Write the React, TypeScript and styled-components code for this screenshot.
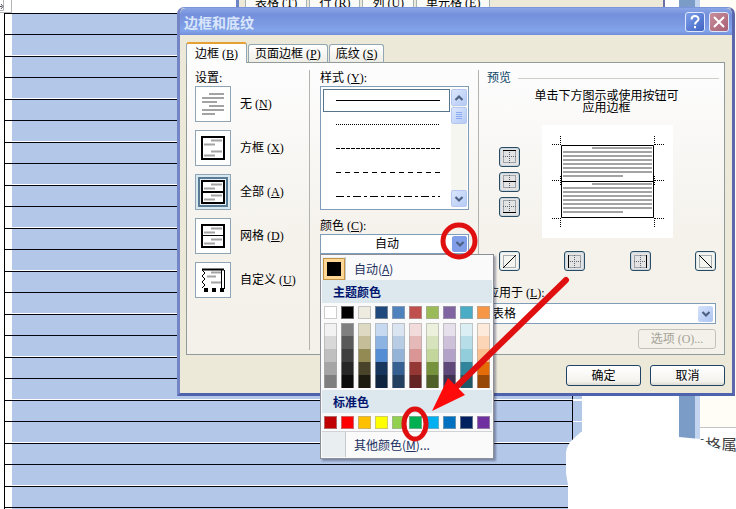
import React from 'react';
import styled, { createGlobalStyle } from 'styled-components';

const Global = createGlobalStyle`
  * { box-sizing: border-box; }
  body { margin: 0; background: #fff; }
  body, button, select {
    font-family: "Liberation Serif", "Noto Sans CJK SC", serif;
    font-size: 12px;
    line-height: 16px;
    color: #000;
  }
  button { padding: 0; margin: 0; cursor: default; }
  svg { display: block; }
`;

/* ---------- document behind the dialog ---------- */

const Desktop = styled.main`
  position: relative;
  min-height: 100vh;
  overflow: hidden;
`;

const Document = styled.div`
  display: grid;
  grid-template-columns: 1fr 97px 16px 5px 36px;
  height: 100vh;
  overflow: hidden;
`;

const Sheet = styled.div`
  padding: 13px 0 0 4px;
  overflow: hidden;
`;

const DocTable = styled.table`
  width: 100%;
  border-collapse: separate;
  border-spacing: 0;
  border-left: 1px solid #000;
`;

const DocRow = styled.tr<{ $even: boolean }>`
  height: ${p => (p.$even ? 22 : 21)}px;
  td {
    padding: 0;
    border-top: 1px solid #05050f;
    border-bottom: ${p => (p.$even ? '1px solid #fff' : '0')};
  }
`;

const Gutter = styled.td`
  width: 7px;
  background: #fff;
`;

const Selected = styled.td`
  background: #b3c7e8;
  border-right: 1px solid #05050f;
`;

const RowEnd = styled.td`
  width: 9px;
  background: #b3c7e8;
  && { border-top-color: #fff; }
`;

const Strip = styled.div<{ $color: string }>`
  background: ${p => p.$color};
`;

const SidePane = styled.div`
  display: grid;
  grid-template-rows: 428px 1fr;
  background: #fff;
  overflow: hidden;
`;

const SideTop = styled.div`
  background: #fffdf6;
  border-bottom: 1px solid #c4c4c4;
`;

const SideText = styled.div`
  display: flex;
  justify-content: flex-end;
  width: 37px;
  padding-top: 6px;
  font: 16px/20px "Noto Sans CJK SC", sans-serif;
  color: #444;
  white-space: nowrap;
`;

const MoveHandle = styled.div`
  position: absolute;
  left: 0;
  top: 0;
`;

const Blob = styled.svg`
  position: absolute;
  right: 0;
  top: 425px;
`;

const BackWindow = styled.div`
  position: absolute;
  left: 236px;
  right: 71px;
  top: 0;
  height: 12px;
  display: flex;
  align-items: flex-end;
  gap: 2px;
  padding: 0 0 2px 6px;
  background: #ece9d8;
  border-left: 3px solid #6b83c6;
  border-right: 2px solid #6b70a8;
  overflow: hidden;
`;

const BackTab = styled.div`
  padding: 0 9px;
  height: 10px;
  display: flex;
  align-items: flex-end;
  background: #fafaf7;
  border: solid #a5b3b5;
  border-width: 0 1px;
  line-height: 14px;
  white-space: pre;
`;

/* ---------- dialog ---------- */

const Dialog = styled.section`
  position: absolute;
  left: 177px;
  right: 1px;
  top: 7px;
  border: 3px solid #6b83c9;
  border-color: #7b94dc #5c66ad #4e62ad #7485c6;
  border-top-width: 1px;
  border-radius: 7px 7px 0 0;
  background: #ece9d8;
`;

const TitleBar = styled.header`
  display: flex;
  align-items: center;
  gap: 4px;
  height: 27px;
  padding: 0 3px 0 4px;
  border-radius: 6px 6px 0 0;
  background: linear-gradient(#8ba6e5, #7590dc 25%, #7c9ae2 60%, #82a4ea 85%, #728dd8);
`;

const Title = styled.h1`
  flex: 1;
  margin: 0;
  font: bold 14px/20px "Noto Sans CJK SC", sans-serif;
  color: #d9e6fb;
`;

const CaptionButton = styled.button<{ $close?: boolean }>`
  display: grid;
  place-items: center;
  width: 20px;
  height: 20px;
  border: 1px solid #dfe7fa;
  border-radius: 3px;
  background: ${p => (p.$close
    ? 'linear-gradient(135deg, #c88f9c, #a85f74)'
    : 'linear-gradient(135deg, #7fa0ea, #3f63c4)')};
`;

const Body = styled.div`
  padding: 7px 7px 7px 6px;
`;

const Tabs = styled.div`
  display: flex;
  align-items: flex-end;
  gap: 1px;
  height: 21px;
  margin-bottom: -1px;
`;

const Tab = styled.button<{ $active?: boolean }>`
  position: relative;
  height: ${p => (p.$active ? 21 : 19)}px;
  padding: 0 ${p => (p.$active ? 8 : 6)}px;
  border: 1px solid #91a7b4;
  border-top: ${p => (p.$active ? '2px solid #e5a135' : '1px solid #91a7b4')};
  border-bottom: ${p => (p.$active ? '0' : '1px solid #919b9c')};
  border-radius: 3px 3px 0 0;
  background: ${p => (p.$active ? '#fdfdfd' : 'linear-gradient(#fff, #eeede5)')};
  white-space: nowrap;
`;

const Panel = styled.div`
  display: grid;
  grid-template-columns: 123px 169px 1fr;
  padding: 7px 0 4px;
  border: 1px solid #919b9c;
  background: linear-gradient(#fdfdfe, #f5f2ec 60%, #f4f1eb);
`;

const Column = styled.div<{ $divided?: boolean }>`
  display: flex;
  flex-direction: column;
  min-height: 280px;
  padding: 0 8px;
  border-right: ${p => (p.$divided ? '1px solid #b3b3ad' : '0')};
`;

const StyleColumn = styled(Column)`
  padding: 0 9px 0 10px;
`;

const Caption = styled.div`
  height: 16px;
  white-space: nowrap;
`;

const Settings = styled.div`
  display: flex;
  flex-direction: column;
  gap: 8px;
`;

const Setting = styled.button`
  display: flex;
  align-items: center;
  gap: 9px;
  border: 0;
  background: none;
  white-space: nowrap;
`;

const Thumb = styled.span<{ $selected?: boolean }>`
  display: grid;
  place-items: center;
  width: 36px;
  height: 36px;
  background: ${p => (p.$selected ? '#e6f0f6' : '#fff')};
  border: 1px solid #8fa5b5;
  box-shadow: ${p => (p.$selected ? 'inset 0 0 0 2px #d7e8f1, inset 0 0 0 4px #587a92' : 'none')};
`;

const StyleList = styled.div`
  display: grid;
  grid-template-columns: 1fr 16px;
  height: 124px;
  padding: 2px 1px 2px 2px;
  margin-bottom: 8px;
  gap: 1px;
  background: #fff;
  border: 1px solid #7f9db9;
`;

const StyleOptions = styled.div`
  display: flex;
  flex-direction: column;
  overflow: hidden;
`;

const StyleOption = styled.button<{ $selected?: boolean }>`
  display: flex;
  align-items: center;
  flex: 0 0 23px;
  margin-bottom: 1px;
  padding: 0 9px 0 12px;
  background: #fff;
  border: 1px solid ${p => (p.$selected ? '#56748c' : 'transparent')};
  svg { width: 100%; }
`;

const ScrollBar = styled.div`
  display: flex;
  flex-direction: column;
  justify-content: space-between;
  background: #f6f6f1;
`;

const ScrollGroup = styled.div`
  display: grid;
  gap: 1px;
`;

const ScrollButton = styled.button`
  display: grid;
  place-items: center;
  width: 16px;
  height: 17px;
  border: 1px solid #b6c8ef;
  border-radius: 2px;
  background: linear-gradient(135deg, #dbe6fc, #b5cbf5);
`;

const ColorCombo = styled.button`
  display: flex;
  align-items: center;
  height: 20px;
  padding: 0 1px;
  border: 1px solid #7f9db9;
  background: #fff;
`;

const ComboText = styled.span`
  flex: 1;
  text-align: center;
`;

const ComboArrow = styled.span<{ $hot?: boolean }>`
  display: grid;
  place-items: center;
  width: 15px;
  height: 16px;
  border-radius: 2px;
  background: ${p => (p.$hot ? '#819fe8' : 'linear-gradient(135deg, #d5e2fb, #adc5f2)')};
  pointer-events: none;
`;

const Legend = styled.h2`
  display: flex;
  align-items: center;
  gap: 7px;
  margin: 0 -3px 0 0;
  font-size: 12px;
  font-weight: normal;
  line-height: 16px;
  color: #0c4566;
  &::after {
    content: "";
    flex: 1;
    height: 1px;
    background: #cfcfc4;
  }
`;

const Hint = styled.p`
  margin: 4px 0 11px 10px;
  line-height: 12px;
  text-align: center;
`;

const PreviewRow = styled.div`
  display: grid;
  grid-template-columns: 21px 131px 1fr;
  gap: 22px;
  align-items: center;
  padding: 0 12px;
`;

const SideButtons = styled.div`
  display: grid;
  gap: 5px;
`;

const BottomButtons = styled.div`
  display: flex;
  justify-content: space-between;
  margin: 13px 0 14px;
  padding: 0 0 0 12px;
`;

const EdgeButton = styled.button<{ $on?: boolean }>`
  display: grid;
  place-items: center;
  width: 21px;
  height: 20px;
  border: 1px solid #294c62;
  border-radius: 3px;
  background: ${p => (p.$on ? '#e3e3e4' : '#f5f5f0')};
  box-shadow: inset 0 0 0 1px ${p => (p.$on ? '#c9d5df' : '#dfe8ea')};
`;

const PreviewCanvas = styled.div`
  background: #fff;
`;

const ApplyLabel = styled.label`
  height: 18px;
`;

const SelectWrap = styled.div`
  display: grid;
  grid-template-columns: 1fr 17px;
  align-items: center;
  height: 21px;
  background: #fff;
  border: 1px solid #7f9db9;
`;

const ApplySelect = styled.select`
  grid-area: 1 / 1 / 2 / 3;
  height: 19px;
  padding: 0 4px;
  border: 0;
  background: transparent;
  appearance: none;
`;

const SelectArrow = styled(ComboArrow)`
  grid-area: 1 / 2;
`;

const PushButton = styled.button<{ $soft?: boolean }>`
  width: ${p => (p.$soft ? 78 : 75)}px;
  height: ${p => (p.$soft ? 20 : 21)}px;
  border: 1px solid ${p => (p.$soft ? '#c3c2b8' : '#1f4468')};
  border-radius: 3px;
  background: ${p => (p.$soft ? '#f3f1ea' : 'linear-gradient(#fff, #f4f3ee 80%, #dcd9cf)')};
  color: ${p => (p.$soft ? '#a5a398' : '#000')};
`;

const OptionsButton = styled(PushButton)`
  align-self: flex-end;
  margin-top: 5px;
`;

const Footer = styled.footer`
  display: flex;
  justify-content: flex-end;
  gap: 9px;
  padding-top: 10px;
`;

/* ---------- colour menu ---------- */

const Menu = styled.div`
  position: absolute;
  left: 320px;
  top: 254px;
  width: 174px;
  padding: 2px 1px 1px;
  border: 1px solid #8d8f98;
  background: #fafafa;
  box-shadow: 2px 2px 2px rgba(40, 40, 70, 0.4);
`;

const MenuItem = styled.button<{ $tall?: boolean }>`
  display: grid;
  grid-template-columns: 24px 1fr;
  align-items: center;
  width: 100%;
  height: ${p => (p.$tall ? 25 : 23)}px;
  border: 0;
  background: none;
  font-family: "Noto Sans CJK SC", sans-serif;
  color: #203060;
  text-align: left;
`;

const MenuIcon = styled.span`
  display: grid;
  place-items: center;
  align-self: stretch;
  background: #e9eef0;
  border-right: 1px solid #c6c9cc;
`;

const MenuText = styled.span`
  padding-left: 8px;
`;

const AutoSwatch = styled.span`
  width: 22px;
  height: 22px;
  background: #000;
  border: 1px solid #c69447;
  box-shadow: inset 0 0 0 3px #ffd794;
`;

const MenuHeading = styled.h3`
  margin: 0;
  height: 23px;
  padding-left: 11px;
  background: #dde7ee;
  font: bold 12px/23px "Noto Sans CJK SC", sans-serif;
  color: #00156e;
`;

const Swatches = styled.div`
  display: grid;
  grid-template-columns: repeat(10, 13px);
  gap: 4px;
  padding: 3px 2px 2px;
`;

const Swatch = styled.button<{ $color: string; $stacked?: boolean }>`
  height: 13px;
  border: 1px solid rgba(170, 170, 170, 0.6);
  border-width: ${p => (p.$stacked ? '0 1px' : '1px')};
  background: ${p => p.$color};
  &:first-child { border-top-width: 1px; }
`;

const Shades = styled.div`
  display: grid;
`;

const StandardSwatches = styled(Swatches)`
  border-bottom: 1px solid #d0d2d6;
`;

const Annotation = styled.svg`
  position: absolute;
  left: 0;
  top: 0;
  pointer-events: none;
`;

/* ---------- drawings ---------- */

const Chevron = ({ up = false }: { up?: boolean }) => (
  <svg width="10" height="8" viewBox="0 0 10 8" fill="none" stroke="#4d6185" strokeWidth="2.2">
    <path d={up ? 'M1.5 6 5 2.5 8.5 6' : 'M1.5 2 5 5.5 8.5 2'} />
  </svg>
);

const Grip = () => (
  <svg width="8" height="8" viewBox="0 0 8 8" stroke="#8caaf0">
    <path d="M1 .5h6M1 2.5h6M1 4.5h6M1 6.5h6" />
  </svg>
);

type Kind = 'none' | 'box' | 'all' | 'grid' | 'custom';

const SettingIcon = ({ kind }: { kind: Kind }) => {
  if (kind === 'none') {
    return (
      <svg width="24" height="24" viewBox="0 0 24 24" stroke="#a3a3a3" strokeWidth="2">
        <path d="M8 2h15M1 6h22M1 10h15M8 14h15M1 18h22M1 22h13" />
      </svg>
    );
  }
  if (kind === 'custom') {
    return (
      <svg width="24" height="24" viewBox="0 0 24 24" fill="none" stroke="#000">
        <path d="M10 4.5h10M6 8.5h9M10 14.5h10" stroke="#a3a3a3" strokeWidth="2" />
        <path d="M1 1.5h22" strokeWidth="2" />
        <path d="M20.5 2v19M23.5 2v19" />
        <path d="M1 2l3 3-3 3 3 3-3 3 3 3-3 3" />
        <path d="M3 22h20" strokeWidth="4" strokeDasharray="4 4" />
      </svg>
    );
  }
  return (
    <svg width="24" height="24" viewBox="0 0 24 24" fill="none" stroke="#000">
      <rect x="1" y="1" width="22" height="22" strokeWidth="2" fill="#fff" />
      <path d="M10 4.5h11M3 8.5h11M10 15.5h11M3 19.5h11" stroke="#a3a3a3" strokeWidth="2" />
      {kind === 'all' && <path d="M1 12h22" strokeWidth="2" />}
      {kind === 'grid' && <path d="M1 11.5h22" />}
    </svg>
  );
};

const LineSample = ({ dash }: { dash: string }) => (
  <svg width="104" height="1" stroke="#000">
    <line x1="0" y1="0.5" x2="104" y2="0.5" strokeDasharray={dash} />
  </svg>
);

type Edge = 'top' | 'middle' | 'bottom' | 'left' | 'right' | 'up' | 'down';

const edgePaths: Record<Edge, string> = {
  top: 'M0 .5h13',
  middle: 'M0 6.5h13',
  bottom: 'M0 12.5h13',
  left: 'M.5 0v13',
  right: 'M12.5 0v13',
  up: 'M0 13 13 0',
  down: 'M0 0 13 13',
};

const EdgeIcon = ({ edge }: { edge: Edge }) => {
  const diagonal = edge === 'up' || edge === 'down';
  return (
    <svg width="13" height="13" viewBox="0 0 13 13" fill="none">
      <path
        d={diagonal ? 'M.5 .5h12v12H.5z' : 'M.5 .5h12v12H.5zM6.5 0v13M0 6.5h13'}
        stroke="#5b6472"
        strokeDasharray="1 1"
      />
      <path d={edgePaths[edge]} stroke="#000" />
    </svg>
  );
};

const paragraph = (y: number) =>
  `M50 ${y}h60` + [4, 8, 12, 16, 20, 24].map(d => `M21 ${y + d}h89`).join('') + `M21 ${y + 28}h60`;

const PreviewDrawing = () => (
  <svg width="131" height="113" viewBox="0 0 131 113" fill="none">
    <path d={paragraph(23)} stroke="#a3a3a3" strokeWidth="2" />
    <path d={paragraph(59)} stroke="#a3a3a3" strokeWidth="2" />
    <path d="M19.5 20.5h92v72h-92zM19 56.5h93" stroke="#000" />
    <path
      d="M18.5 11v9M112.5 11v9M18.5 93v9M112.5 93v9M10 19.5h9M113 19.5h9M10 55.5h9M113 55.5h9M10 93.5h9M113 93.5h9M18.5 51v9M112.5 51v9"
      stroke="#000"
      strokeDasharray="1 1"
    />
  </svg>
);

/* ---------- data ---------- */

const Key = ({ k, colon = false }: { k: string; colon?: boolean }) => (
  <> (<u>{k}</u>){colon && ':'}</>
);

const settings: { kind: Kind; label: string; k: string }[] = [
  { kind: 'none', label: '无', k: 'N' },
  { kind: 'box', label: '方框', k: 'X' },
  { kind: 'all', label: '全部', k: 'A' },
  { kind: 'grid', label: '网格', k: 'D' },
  { kind: 'custom', label: '自定义', k: 'U' },
];

const lineStyles = ['none', '1 1', '4 1', '5 4', '8 3 3 3'];

const theme = ['#ffffff', '#000000', '#eeece1', '#1f497d', '#4f81bd', '#c0504d', '#9bbb59', '#8064a2', '#4bacc6', '#f79646'];

const shades = [
  ['#f2f2f2', '#7f7f7f', '#ddd9c3', '#c6d9f0', '#dbe5f1', '#f2dcdb', '#ebf1dd', '#e5e0ec', '#dbeef3', '#fdeada'],
  ['#d8d8d8', '#595959', '#c4bd97', '#8db3e2', '#b8cce4', '#e5b9b7', '#d7e3bc', '#ccc1d9', '#b7dde8', '#fbd5b5'],
  ['#bfbfbf', '#3f3f3f', '#938953', '#548dd4', '#95b3d7', '#d99694', '#c3d69b', '#b2a2c7', '#92cddc', '#fac08f'],
  ['#a5a5a5', '#262626', '#494429', '#17365d', '#366092', '#953734', '#76923c', '#5f497a', '#31859b', '#e36c09'],
  ['#7f7f7f', '#0c0c0c', '#1d1b10', '#0f243e', '#244061', '#632423', '#4f6128', '#3f3151', '#205867', '#974806'],
];

const standard = ['#c00000', '#ff0000', '#ffc000', '#ffff00', '#92d050', '#00b050', '#00b0f0', '#0070c0', '#002060', '#7030a0'];

/* ---------- page ---------- */

const Background = () => (
  <>
    <Document>
      <Sheet>
        <DocTable>
          <tbody>
            {Array.from({ length: 24 }, (_, i) => (
              <DocRow key={i} $even={i % 2 === 1}>
                <Gutter />
                <Selected />
                <RowEnd />
              </DocRow>
            ))}
          </tbody>
        </DocTable>
      </Sheet>
      <Strip $color="#fff" />
      <Strip $color="#7c9cc8" />
      <Strip $color="#c3d5ee" />
      <SidePane>
        <SideTop />
        <SideText>表格属</SideText>
      </SidePane>
    </Document>
    <MoveHandle>
      <svg width="12" height="13" viewBox="0 0 12 13" fill="none">
        <path d="M0 12.5h11.5V0M3.5 0v10.500H0" stroke="#b5b5b5" />
        <path d="M0 6.500h2M1 4l2 2.500-2 2.500" stroke="#556" />
      </svg>
    </MoveHandle>
    <BackWindow>
      <BackTab>表格<Key k="T" /></BackTab>
      <BackTab>行<Key k="R" /></BackTab>
      <BackTab>列<Key k="U" /></BackTab>
      <BackTab>单元格<Key k="E" /></BackTab>
    </BackWindow>
    <Blob width="170" height="84" viewBox="0 0 170 84" fill="#fff">
      <path d="M2 84V60L0 48V28C1 18 8 13 15 7L30 0H108L113 12 134 14C143 20 154 27 170 27V84Z" />
    </Blob>
  </>
);

const PreviewColumn = () => (
  <Column>
    <Legend>预览</Legend>
    <Hint>单击下方图示或使用按钮可<br />应用边框</Hint>
    <PreviewRow>
      <SideButtons>
        <EdgeButton $on aria-label="上边框"><EdgeIcon edge="top" /></EdgeButton>
        <EdgeButton $on aria-label="内部横框线"><EdgeIcon edge="middle" /></EdgeButton>
        <EdgeButton $on aria-label="下边框"><EdgeIcon edge="bottom" /></EdgeButton>
      </SideButtons>
      <PreviewCanvas><PreviewDrawing /></PreviewCanvas>
    </PreviewRow>
    <BottomButtons>
      <EdgeButton aria-label="斜上框线"><EdgeIcon edge="up" /></EdgeButton>
      <EdgeButton $on aria-label="左边框"><EdgeIcon edge="left" /></EdgeButton>
      <EdgeButton $on aria-label="右边框"><EdgeIcon edge="right" /></EdgeButton>
      <EdgeButton aria-label="斜下框线"><EdgeIcon edge="down" /></EdgeButton>
    </BottomButtons>
    <ApplyLabel htmlFor="apply">应用于<Key k="L" colon /></ApplyLabel>
    <SelectWrap>
      <ApplySelect id="apply" defaultValue="table">
        <option value="table">表格</option>
      </ApplySelect>
      <SelectArrow><Chevron /></SelectArrow>
    </SelectWrap>
    <OptionsButton $soft disabled>选项 (O)...</OptionsButton>
  </Column>
);

const ColorMenu = () => (
  <Menu>
    <MenuItem>
      <MenuIcon><AutoSwatch /></MenuIcon>
      <MenuText>自动(<u>A</u>)</MenuText>
    </MenuItem>
    <MenuHeading>主题颜色</MenuHeading>
    <Swatches>
      {theme.map(c => <Swatch key={c} $color={c} aria-label={c} />)}
      {theme.map((c, col) => (
        <Shades key={c}>
          {shades.map(row => <Swatch key={row[col]} $stacked $color={row[col]} aria-label={row[col]} />)}
        </Shades>
      ))}
    </Swatches>
    <MenuHeading>标准色</MenuHeading>
    <StandardSwatches>
      {standard.map(c => <Swatch key={c} $color={c} aria-label={c} />)}
    </StandardSwatches>
    <MenuItem $tall>
      <MenuIcon />
      <MenuText>其他颜色(<u>M</u>)...</MenuText>
    </MenuItem>
  </Menu>
);

export default function App() {
  return (
    <Desktop>
      <Global />
      <Background />
      <Dialog role="dialog" aria-labelledby="dialog-title">
        <TitleBar>
          <Title id="dialog-title">边框和底纹</Title>
          <CaptionButton aria-label="帮助">
            <svg width="12" height="14" viewBox="0 0 12 14" fill="none" stroke="#fff" strokeWidth="2">
              <path d="M2.500 4.500C2.500 0 9.500 0 9.500 4c0 2.500-3.500 2.500-3.500 5.500M6 11v2.200" />
            </svg>
          </CaptionButton>
          <CaptionButton $close aria-label="关闭">
            <svg width="12" height="12" viewBox="0 0 12 12" stroke="#fff" strokeWidth="2">
              <path d="M1 1l10 10M11 1 1 11" />
            </svg>
          </CaptionButton>
        </TitleBar>
        <Body>
          <Tabs role="tablist">
            <Tab $active role="tab" aria-selected>边框<Key k="B" /></Tab>
            <Tab role="tab">页面边框<Key k="P" /></Tab>
            <Tab role="tab">底纹<Key k="S" /></Tab>
          </Tabs>
          <Panel>
            <Column $divided>
              <Caption>设置:</Caption>
              <Settings>
                {settings.map(s => (
                  <Setting key={s.kind}>
                    <Thumb $selected={s.kind === 'all'}><SettingIcon kind={s.kind} /></Thumb>
                    <span>{s.label}<Key k={s.k} /></span>
                  </Setting>
                ))}
              </Settings>
            </Column>
            <StyleColumn $divided>
              <Caption>样式<Key k="Y" colon /></Caption>
              <StyleList>
                <StyleOptions>
                  {lineStyles.map((dash, i) => (
                    <StyleOption key={dash} $selected={i === 0} aria-label={`线型 ${i + 1}`}>
                      <LineSample dash={dash} />
                    </StyleOption>
                  ))}
                </StyleOptions>
                <ScrollBar>
                  <ScrollGroup>
                    <ScrollButton aria-label="向上"><Chevron up /></ScrollButton>
                    <ScrollButton aria-label="滚动"><Grip /></ScrollButton>
                  </ScrollGroup>
                  <ScrollButton aria-label="向下"><Chevron /></ScrollButton>
                </ScrollBar>
              </StyleList>
              <Caption>颜色<Key k="C" colon /></Caption>
              <ColorCombo>
                <ComboText>自动</ComboText>
                <ComboArrow $hot><Chevron /></ComboArrow>
              </ColorCombo>
            </StyleColumn>
            <PreviewColumn />
          </Panel>
          <Footer>
            <PushButton>确定</PushButton>
            <PushButton>取消</PushButton>
          </Footer>
        </Body>
      </Dialog>
      <ColorMenu />
      <Annotation width="600" height="460" viewBox="0 0 600 460" fill="none" stroke="#e01010">
        <ellipse cx="459" cy="241" rx="16" ry="16" strokeWidth="5" />
        <ellipse cx="415" cy="424" rx="11" ry="15" strokeWidth="5" />
        <path d="M566 280 452 391" strokeWidth="6" strokeLinecap="round" />
        <path d="M432 411 448 378 465 395Z" fill="#ff0a0a" stroke="none" />
      </Annotation>
    </Desktop>
  );
}
